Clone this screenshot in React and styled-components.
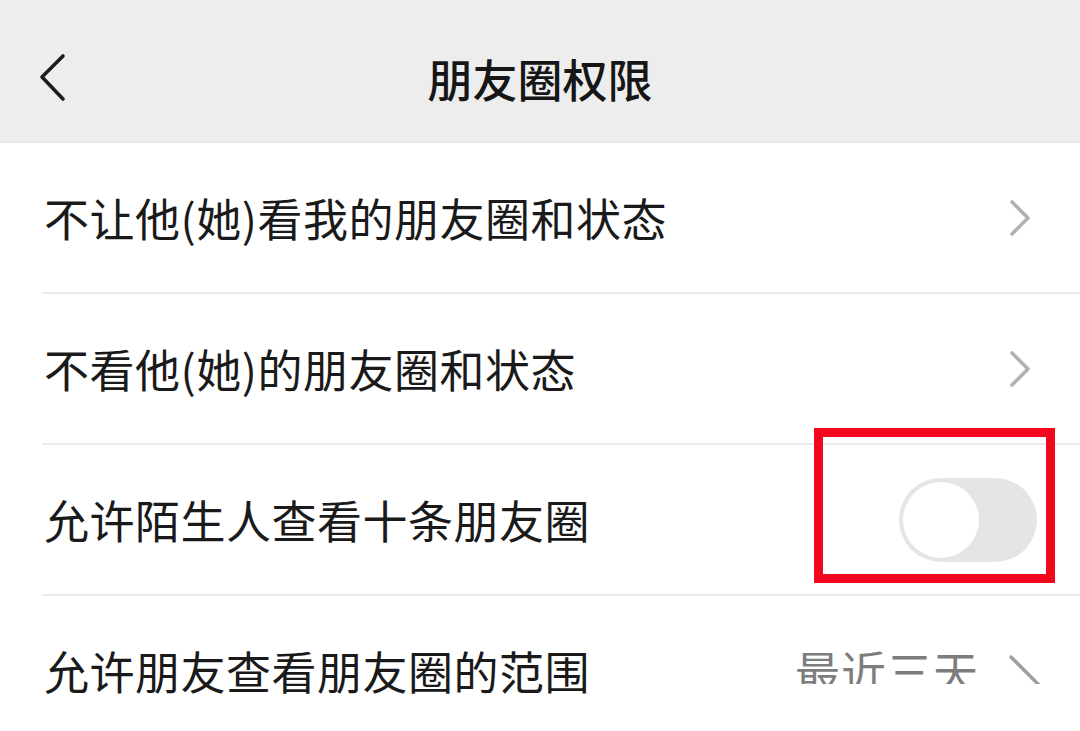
import React from "react";
import styled, { createGlobalStyle } from "styled-components";

const GlobalStyle = createGlobalStyle`
  html, body {
    margin: 0;
    padding: 0;
    background: #ffffff;
  }
  body {
    font-family: "Noto Sans CJK SC", "Noto Sans", sans-serif;
    color: #1a1a1a;
  }
`;

const Screen = styled.div`
  width: 1080px;
  height: 731px;
  overflow: hidden;
  background: #ffffff;
`;

const Header = styled.header`
  height: 143px;
  box-sizing: border-box;
  padding-top: 14px;
  background: #ededed;
  border-bottom: 1px solid #e2e2e2;
  display: grid;
  grid-template-columns: 1fr auto 1fr;
  align-items: center;
`;

const BackButton = styled.div`
  display: flex;
  align-items: center;
  padding-left: 38px;
  svg {
    display: block;
  }
`;

const Title = styled.h1`
  margin: 0;
  font-size: 45px;
  line-height: 1;
  font-weight: 500;
  color: #161616;
`;

const List = styled.div`
  display: flex;
  flex-direction: column;
`;

const Row = styled.div`
  position: relative;
  height: 151px;
  box-sizing: border-box;
  margin-left: 42px;
  padding-left: 2px;
  padding-right: 43px;
  border-bottom: 2px solid #ebebeb;
  display: flex;
  align-items: center;
  justify-content: space-between;
`;

const Label = styled.span`
  font-size: 45px;
  line-height: 45px;
  color: #1a1a1a;
  letter-spacing: 0.5px;
  white-space: nowrap;
`;

const Chevron = styled.svg`
  display: block;
  margin-right: 6px;
`;

const Toggle = styled.div`
  width: 138px;
  height: 84px;
  border-radius: 42px;
  background: #e5e5e5;
  display: flex;
  align-items: center;
  padding-left: 4px;
  box-sizing: border-box;
`;

const Knob = styled.div`
  width: 76px;
  height: 76px;
  border-radius: 50%;
  background: #ffffff;
`;

const Annotation = styled.div`
  position: absolute;
  left: 772px;
  top: -17px;
  width: 241px;
  height: 155px;
  box-sizing: border-box;
  border: 9px solid #f2071f;
  z-index: 2;
  pointer-events: none;
`;

const ValueClip = styled.div`
  align-self: flex-start;
  margin-top: 52px;
  margin-right: -6px;
  height: 36px;
  overflow: hidden;
  display: flex;
  align-items: flex-start;
  gap: 30px;
`;

const Value = styled.span`
  font-size: 45px;
  line-height: 45px;
  color: #7d7d7d;
  letter-spacing: 1px;
  white-space: nowrap;
`;

const Slash = styled.svg`
  display: block;
  margin-top: 7px;
`;

function ArrowRight() {
  return (
    <Chevron width="22" height="38" viewBox="0 0 22 38">
      <polyline
        points="3,3 19,19 3,35"
        fill="none"
        stroke="#b2b2b2"
        strokeWidth="3.6"
        strokeLinecap="round"
        strokeLinejoin="round"
      />
    </Chevron>
  );
}

const rows = [
  { label: "不让他(她)看我的朋友圈和状态", kind: "link" },
  { label: "不看他(她)的朋友圈和状态", kind: "link" },
  { label: "允许陌生人查看十条朋友圈", kind: "toggle" },
  { label: "允许朋友查看朋友圈的范围", kind: "value", value: "最近三天" },
];

export default function App() {
  return (
    <>
      <GlobalStyle />
      <Screen>
        <Header>
          <BackButton>
            <svg width="32" height="50" viewBox="0 0 32 50">
              <polyline
                points="25,3 4,24 25,46"
                fill="none"
                stroke="#1c1c1c"
                strokeWidth="3.6"
                strokeLinecap="round"
                strokeLinejoin="round"
              />
            </svg>
          </BackButton>
          <Title>朋友圈权限</Title>
          <div />
        </Header>

        <List>
          {rows.map(row => (
            <Row key={row.label}>
              <Label>{row.label}</Label>
              {row.kind === "link" && <ArrowRight />}
              {row.kind === "toggle" && (
                <>
                  <Toggle>
                    <Knob />
                  </Toggle>
                  <Annotation />
                </>
              )}
              {row.kind === "value" && (
                <ValueClip>
                  <Value>{row.value}</Value>
                  <Slash width="34" height="34" viewBox="0 0 34 34">
                    <line
                      x1="2"
                      y1="2"
                      x2="31"
                      y2="31"
                      stroke="#9e9e9e"
                      strokeWidth="3.4"
                      strokeLinecap="round"
                    />
                  </Slash>
                </ValueClip>
              )}
            </Row>
          ))}
        </List>
      </Screen>
    </>
  );
}
